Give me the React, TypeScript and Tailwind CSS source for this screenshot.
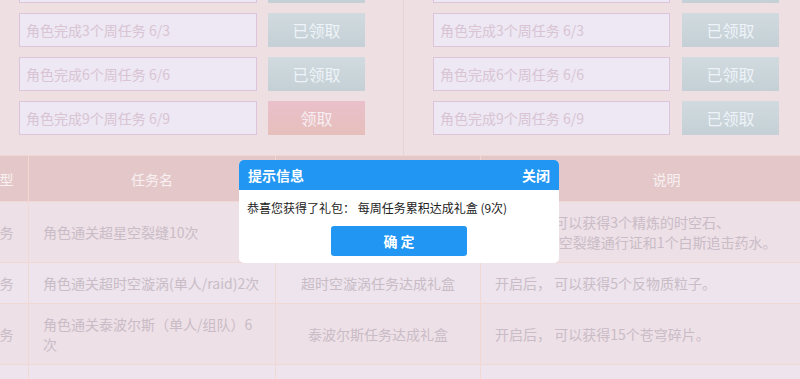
import React from "react";

const leftRows = [
  { text: "角色完成1个周任务 6/1", btn: "已领取", claim: false },
  { text: "角色完成3个周任务 6/3", btn: "已领取", claim: false },
  { text: "角色完成6个周任务 6/6", btn: "已领取", claim: false },
  { text: "角色完成9个周任务 6/9", btn: "领取", claim: true },
];
const rightRows = [
  { text: "角色完成1个周任务 6/1", btn: "已领取", claim: false },
  { text: "角色完成3个周任务 6/3", btn: "已领取", claim: false },
  { text: "角色完成6个周任务 6/6", btn: "已领取", claim: false },
  { text: "角色完成9个周任务 6/9", btn: "已领取", claim: false },
];

function Btn({ label, claim }: { label: string; claim: boolean }) {
  return (
    <div
      className={
        "w-[97px] h-[34px] shrink-0 flex items-center justify-center text-[16px] " +
        (claim
          ? "bg-gradient-to-b from-[#eac0cb] to-[#e6bfbb] text-[#f6eef2]"
          : "bg-gradient-to-b from-[#d0dadf] to-[#c5d0d6] text-[#edf3f8]")
      }
    >
      {label}
    </div>
  );
}

function Input({ text, w }: { text: string; w: string }) {
  return (
    <div
      className={
        w +
        " h-[34px] shrink-0 border border-[#dcc4da] bg-[#ede8f4] px-[6px] flex items-center text-[14px] text-[#d9c4d3]"
      }
    >
      {text}
    </div>
  );
}

const td = "border border-[#f1d8d2] px-[14px] py-[10px] align-middle";

export default function App() {
  return (
    <div className="relative w-[800px] h-[379px] overflow-hidden bg-[#eedfe3] font-['Noto_Sans_CJK_SC','Noto_Sans',sans-serif]">
      {/* top claim section */}
      <div className="flex h-[155px] overflow-hidden">
        <div className="w-[403px] shrink-0 pl-[19px]">
          <div className="flex flex-col gap-[10px] mt-[-31px]">
            {leftRows.map((r, i) => (
              <div key={i} className="flex gap-[11px]">
                <Input text={r.text} w="w-[238px]" />
                <Btn label={r.btn} claim={r.claim} />
              </div>
            ))}
          </div>
        </div>
        <div className="flex-1 border-l border-[#e6d3da] pl-[29px]">
          <div className="flex flex-col gap-[10px] mt-[-31px]">
            {rightRows.map((r, i) => (
              <div key={i} className="flex gap-[12px]">
                <Input text={r.text} w="w-[237px]" />
                <Btn label={r.btn} claim={r.claim} />
              </div>
            ))}
          </div>
        </div>
      </div>

      {/* table */}
      <table className="ml-[-58px] w-[910px] table-fixed border-collapse text-[14px] leading-[20px]">
        <colgroup>
          <col className="w-[86px]" />
          <col className="w-[247px]" />
          <col className="w-[205px]" />
          <col className="w-[372px]" />
        </colgroup>
        <thead>
          <tr className="h-[46px] bg-[#e4c8c9] text-[#f8f0f2]">
            <th className="border border-[#f1d8d2] font-normal">任务类型</th>
            <th className="border border-[#f1d8d2] font-normal">任务名</th>
            <th className="border border-[#f1d8d2] font-normal">奖励</th>
            <th className="border border-[#f1d8d2] font-normal">说明</th>
          </tr>
        </thead>
        <tbody className="text-[#c9bcc6]">
          <tr className="bg-[#eee0e7]">
            <td className={td + " text-center"}>每周任务</td>
            <td className={td}>角色通关超星空裂缝10次</td>
            <td className={td + " text-center"}>超星空裂缝任务达成礼盒</td>
            <td className={td}>
              开启后， 可以获得3个精炼的时空石、
              <br />
              及1个超时空裂缝通行证和1个白斯追击药水。
            </td>
          </tr>
          <tr className="bg-[#ede4ed]">
            <td className={td + " text-center"}>每周任务</td>
            <td className={td}>角色通关超时空漩涡(单人/raid)2次</td>
            <td className={td + " text-center"}>超时空漩涡任务达成礼盒</td>
            <td className={td}>开启后， 可以获得5个反物质粒子。</td>
          </tr>
          <tr className="bg-[#eee0e7]">
            <td className={td + " text-center"}>每周任务</td>
            <td className={td}>角色通关泰波尔斯（单人/组队）6次</td>
            <td className={td + " text-center"}>泰波尔斯任务达成礼盒</td>
            <td className={td}>开启后， 可以获得15个苍穹碎片。</td>
          </tr>
          <tr className="bg-[#ede4ed] h-[60px]">
            <td className={td}></td>
            <td className={td}></td>
            <td className={td}></td>
            <td className={td}></td>
          </tr>
        </tbody>
      </table>

      {/* modal */}
      <div className="absolute left-[239px] top-[160px] w-[320px] rounded-[5px] bg-white overflow-hidden">
        <div className="h-[30px] bg-[#2196f3] px-[9px] flex items-center justify-between text-white font-bold text-[14px]">
          <span>提示信息</span>
          <span>关闭</span>
        </div>
        <div className="px-[8px] pt-[9px] pb-[7px]">
          <p className="text-[12px] leading-[18px] text-[#222]">
            恭喜您获得了礼包： 每周任务累积达成礼盒 (9次)
          </p>
          <button className="block mx-auto mt-[9px] w-[136px] h-[30px] rounded-[3px] bg-[#2196f3] text-white font-bold text-[14px]">
            确 定
          </button>
        </div>
      </div>
    </div>
  );
}
